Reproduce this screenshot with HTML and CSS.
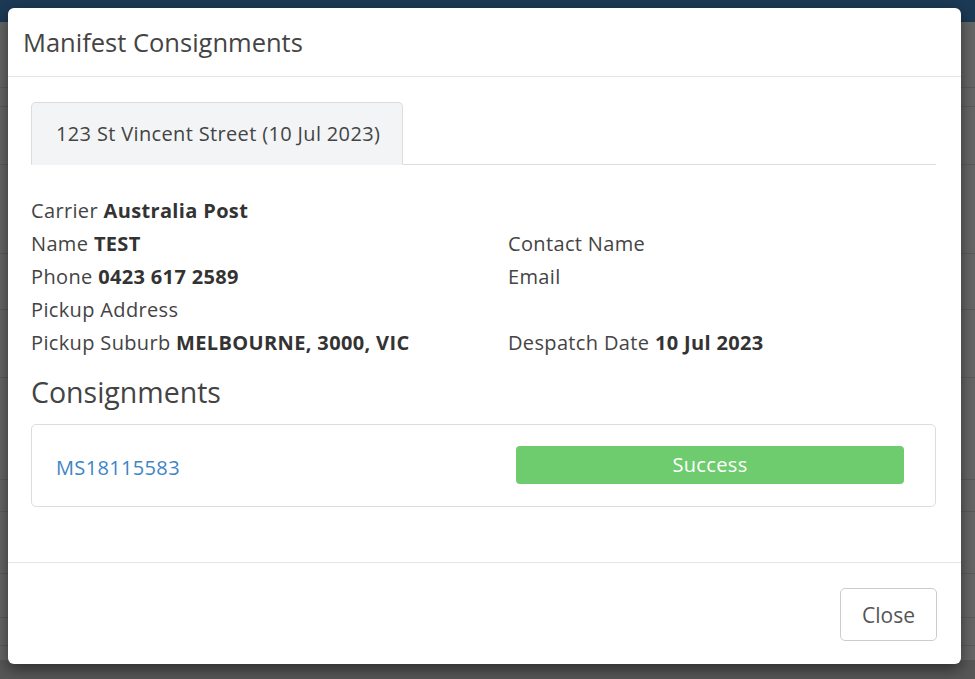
FILE: index.html
```html
<!DOCTYPE html>
<html lang="en">
<head>
    <meta charset="UTF-8">
    <title>Manifest Consignments</title>
    <link rel="stylesheet" href="styles.css">
</head>
<body>
    <div class="page">
        <div class="topbar"></div>
        <div class="row" style="height: 66px"></div>
        <div class="row" style="height: 19px"></div>
        <div class="row" style="height: 58px"></div>
        <div class="row" style="height: 89px"></div>
        <div class="row" style="height: 56px"></div>
        <div class="row" style="height: 68px"></div>
        <div class="row" style="height: 102px"></div>
        <div class="row" style="height: 32px"></div>
        <div class="row" style="height: 62px"></div>
        <div class="row" style="height: 44px"></div>
        <div class="row" style="height: 28px"></div>
        <div class="page-footer"></div>
    </div>

    <div class="modal">
        <div class="modal-header">
            <h4 class="modal-title">Manifest Consignments</h4>
        </div>
        <div class="modal-body">
            <ul class="tabs">
                <li class="tab active">123 St Vincent Street (10 Jul 2023)</li>
            </ul>
            <div class="details">
                <div>Carrier <b>Australia Post</b></div>
                <div></div>
                <div>Name <b>TEST</b></div>
                <div>Contact Name</div>
                <div>Phone <b>0423 617 2589</b></div>
                <div>Email</div>
                <div>Pickup Address</div>
                <div></div>
                <div>Pickup Suburb <b>MELBOURNE, 3000, VIC</b></div>
                <div>Despatch Date <b>10 Jul 2023</b></div>
            </div>
            <h3 class="section-title">Consignments</h3>
            <div class="consignment">
                <a class="con-link" href="#">MS18115583</a>
                <span class="badge-success">Success</span>
            </div>
        </div>
        <div class="modal-footer">
            <button class="btn">Close</button>
        </div>
    </div>
</body>
</html>
```

FILE: styles.css
```css
*{
    margin: 0;
    padding: 0;
    box-sizing: border-box;
}

body{
    background-color: #666;
    font-family: "Open Sans", "Liberation Sans", sans-serif;
    font-size: 20px;
    letter-spacing: 0.35px;
    color: #444;
    height: 679px;
    overflow: hidden;
}

.topbar{
    height: 22px;
    background-color: #1c3a55;
}

.row{
    border-bottom: 1px solid #5b5b5b;
}

.page-footer{
    position: absolute;
    left: 0;
    right: 0;
    top: 660px;
    height: 20px;
    background-color: #575757;
}

.modal{
    position: absolute;
    top: 8px;
    left: 8px;
    width: 953px;
    height: 656px;
    background-color: #fff;
    border-radius: 6px;
    box-shadow: 0 5px 15px rgba(0, 0, 0, 0.5);
    display: flex;
    flex-direction: column;
}

.modal-header{
    height: 69px;
    padding: 0 15px;
    display: flex;
    align-items: center;
    border-bottom: 1px solid #e5e5e5;
}

.modal-title{
    font-size: 25.5px;
    font-weight: normal;
    letter-spacing: 0;
    color: #444;
}

.modal-body{
    flex: 1;
    padding: 25px 25px 0 23px;
}

.tabs{
    list-style: none;
    display: flex;
    border-bottom: 1px solid #ddd;
}

.tab{
    height: 63px;
    margin-bottom: -1px;
    padding: 0 22px 0 24px;
    display: flex;
    align-items: center;
    background-color: #f3f4f6;
    border: 1px solid #ddd;
    border-bottom-color: #f3f4f6;
    border-radius: 5px 5px 0 0;
    color: #444;
}

.details{
    display: grid;
    grid-template-columns: 477px 1fr;
    margin-top: 29px;
    line-height: 33px;
}

.details b{
    font-weight: bold;
    color: #333;
}

.section-title{
    font-size: 28.5px;
    font-weight: normal;
    letter-spacing: 0;
    line-height: 40px;
    margin-top: 13px;
    color: #444;
}

.consignment{
    margin-top: 12px;
    height: 83px;
    border: 1px solid #ddd;
    border-radius: 5px;
    display: grid;
    grid-template-columns: 460px 388px;
    align-items: center;
    padding-left: 24px;
    padding-bottom: 2px;
}

.con-link{
    color: #3d85c6;
    text-decoration: none;
    padding-top: 6px;
}

.badge-success{
    height: 38px;
    background-color: #6ecc6f;
    color: #fff;
    border-radius: 4px;
    display: flex;
    align-items: center;
    justify-content: center;
}

.modal-footer{
    height: 102px;
    border-top: 1px solid #e5e5e5;
    display: flex;
    justify-content: flex-end;
    align-items: center;
    padding-right: 24px;
    padding-top: 2px;
}

.btn{
    width: 97px;
    height: 53px;
    font-family: "Open Sans", "Liberation Sans", sans-serif;
    font-size: 21px;
    color: #555;
    background-color: #fff;
    border: 1px solid #ccc;
    border-radius: 5px;
    cursor: pointer;
}
```
